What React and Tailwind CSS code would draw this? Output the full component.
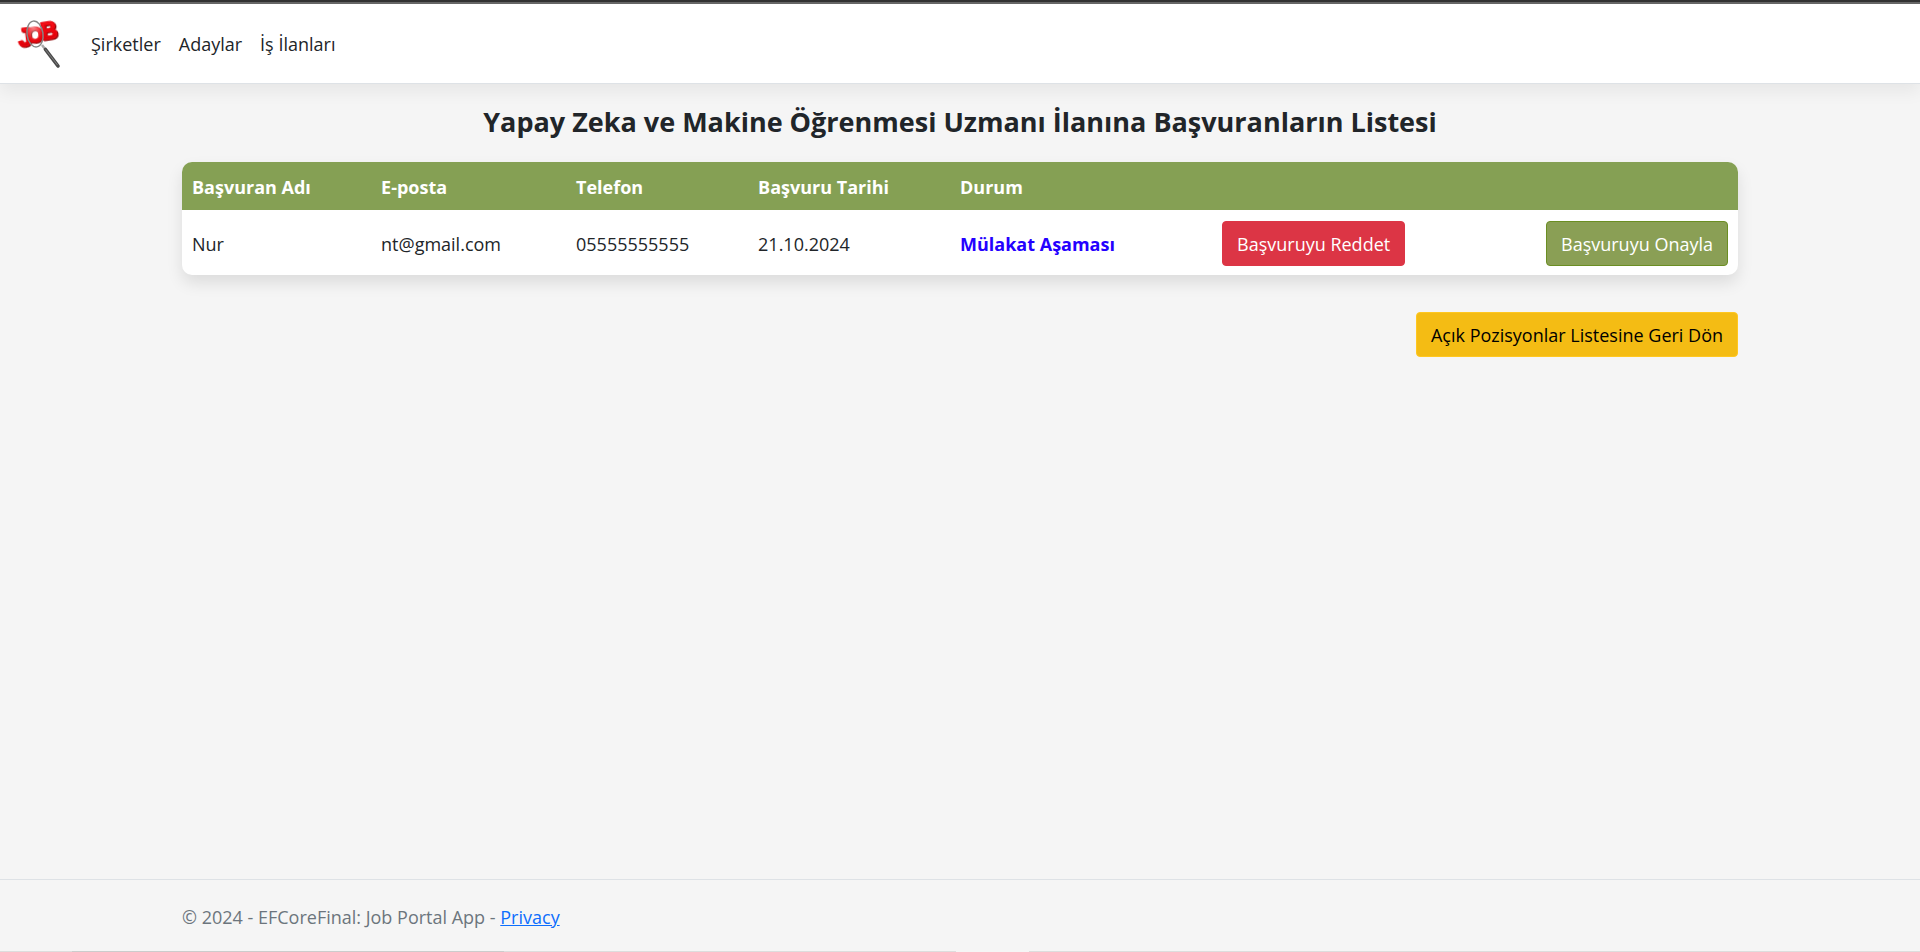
import React from "react";

const navLinks = ["Şirketler", "Adaylar", "İş İlanları"];

const logoLetters = [
  { letter: "J", place: "translate(3 29) rotate(-7)", size: 25 },
  { letter: "O", place: "translate(11 25) rotate(-6)", size: 22 },
  { letter: "B", place: "translate(26 22) rotate(-9)", size: 23 },
];

function Logo() {
  return (
    <svg viewBox="0 0 56 52" className="h-[52px] w-14 overflow-visible" role="img" aria-label="Job">
      <defs>
        <linearGradient id="red" x1="0" y1="0" x2="0" y2="1">
          <stop offset="0" stopColor="#ff1a22" />
          <stop offset="0.6" stopColor="#ee000a" />
          <stop offset="1" stopColor="#c00008" />
        </linearGradient>
        <radialGradient id="glass" cx="0.45" cy="0.2" r="0.6">
          <stop offset="0" stopColor="#ffffff" stopOpacity="0.5" />
          <stop offset="1" stopColor="#ffffff" stopOpacity="0" />
        </radialGradient>
      </defs>
      <g className="font-['Liberation_Sans',sans-serif] font-bold" strokeLinejoin="round">
        {logoLetters.map(({ letter, place, size }) => (
          <text
            key={letter}
            transform={place}
            fontSize={size}
            fill="url(#red)"
            stroke="#e8070f"
            strokeWidth="1.6"
            className="drop-shadow-[1px_1px_0_#8d0508]"
          >
            {letter}
          </text>
        ))}
      </g>
      <ellipse cx="19" cy="16" rx="8" ry="13" fill="url(#glass)" stroke="#858585" strokeWidth="1.5" transform="rotate(-8 19 16)" />
      <path d="M26 27L29 31" stroke="#aaa" strokeWidth="2.5" />
      <path d="M29.500 31.500L42 48" stroke="#4a4a4a" strokeWidth="3.600" strokeLinecap="round" />
      <path d="M29.500 31.500L41.500 47" stroke="#858585" strokeWidth="0.900" />
    </svg>
  );
}

const button = "rounded border px-[14px] pt-[9px] pb-[7px] leading-[27px] whitespace-nowrap";

export default function App() {
  return (
    <div className="flex min-h-screen flex-col bg-[#f5f5f5] font-['Open_Sans','Noto_Sans',sans-serif] text-[18px] leading-[27px] text-[#212529]">
      <header className="border-t-2 border-[#333]">
        <nav className="flex h-[82px] items-center border-t-2 border-b border-t-[#666] border-b-[#dee2e6] bg-white pl-4 shadow-[0_8px_16px_rgba(0,0,0,0.06)]">
          <a href="#" className="mr-[10px] block">
            <Logo />
          </a>
          <ul className="flex pt-[2px]">
            {navLinks.map((label) => (
              <li key={label}>
                <a href="#" className="block px-[9px]">{label}</a>
              </li>
            ))}
          </ul>
        </nav>
      </header>

      <main className="mx-auto w-full max-w-[1556px] flex-1">
        <h1 className="mt-[21px] text-center text-[27px] leading-[34px] font-bold">
          Yapay Zeka ve Makine Öğrenmesi Uzmanı İlanına Başvuranların Listesi
        </h1>
        <div className="mt-[23px] overflow-hidden rounded-[10px] bg-white shadow-[0_8px_16px_rgba(0,0,0,0.1)]">
          <table className="w-full table-fixed text-left">
            <colgroup>
              <col className="w-[12.15%]" />
              <col className="w-[12.53%]" />
              <col className="w-[11.7%]" />
              <col className="w-[12.98%]" />
              <col className="w-[16.84%]" />
              <col className="w-[16.9%]" />
              <col className="w-[16.9%]" />
            </colgroup>
            <thead className="bg-[#85a054] text-white">
              <tr className="h-12">
                <th className="px-[10px] pt-[2px] font-bold">Başvuran Adı</th>
                <th className="px-[10px] pt-[2px] font-bold">E-posta</th>
                <th className="px-[10px] pt-[2px] font-bold">Telefon</th>
                <th className="px-[10px] pt-[2px] font-bold">Başvuru Tarihi</th>
                <th className="px-[10px] pt-[2px] font-bold">Durum</th>
                <th />
                <th />
              </tr>
            </thead>
            <tbody>
              <tr className="h-[65px]">
                <td className="px-[10px] pt-1">Nur</td>
                <td className="px-[10px] pt-1">nt@gmail.com</td>
                <td className="px-[10px] pt-1">05555555555</td>
                <td className="px-[10px] pt-1">21.10.2024</td>
                <td className="px-[10px] pt-1 font-bold text-[#2400ff]">Mülakat Aşaması</td>
                <td className="px-[10px] pt-[2px]">
                  <button type="button" className={`${button} border-[#dc3545] bg-[#dc3545] text-white`}>
                    Başvuruyu Reddet
                  </button>
                </td>
                <td className="px-[10px] pt-[2px] text-right">
                  <button type="button" className={`${button} border-[#6b8e23] bg-[#8a9f55] text-white`}>
                    Başvuruyu Onayla
                  </button>
                </td>
              </tr>
            </tbody>
          </table>
        </div>
        <div className="mt-[37px] flex justify-end">
          <a href="#" className={`${button} border-[#ffc720] bg-[#f4bc14] text-black`}>
            Açık Pozisyonlar Listesine Geri Dön
          </a>
        </div>
      </main>

      <footer className="border-t border-[#dee2e6] text-[#6c757d]">
        <div className="mx-auto flex h-[71px] w-full max-w-[1556px] items-center pt-1">
          <p>
            © 2024 - EFCoreFinal: Job Portal App -{" "}
            <a href="#" className="text-[#0d6efd] underline">Privacy</a>
          </p>
        </div>
        <div className="flex h-px">
          <div className="w-[3.75%] bg-[#ddd]" />
          <div className="w-[22.5%] bg-[#ccc]" />
          <div className="w-[23.55%] bg-[#ddd]" />
          <div className="w-[3.8%]" />
          <div className="flex-1 bg-[#ddd]" />
        </div>
      </footer>
    </div>
  );
}
